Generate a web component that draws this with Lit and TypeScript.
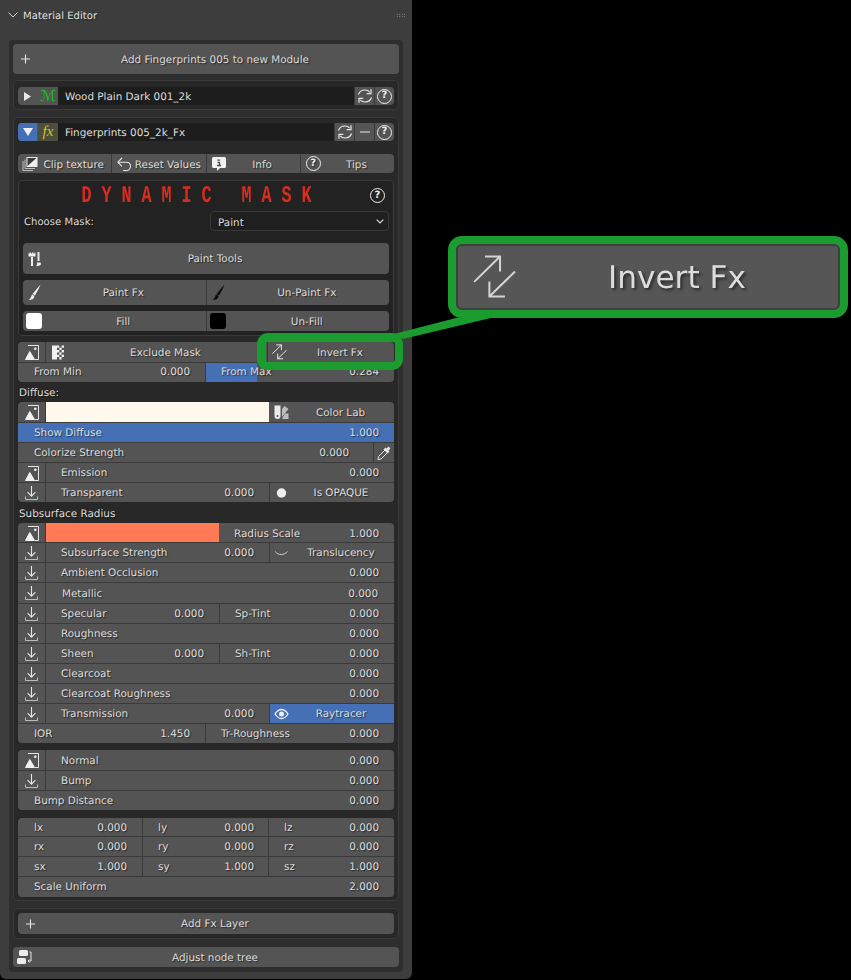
import { LitElement, html, css, svg } from "lit";
import { customElement } from "lit/decorators.js";

const S = (inner: unknown, size = 16) => html`<svg class="ic" width=${size} height=${size} viewBox="0 0 16 16" fill="none" stroke="#e6e6e6" stroke-width="1.1">${inner}</svg>`;

const icons: Record<string, unknown> = {
  plus: svg`<path d="M8.5 3.5v9M4 8h9" stroke-width="1.1"/>`,
  image: svg`<path d="M4 1.5H14.5V15.5H11" stroke-width="1"/><path d="M1.5 15.5L5.8 7.5 10.5 15.5z" fill="#f2f2f2" stroke="#f2f2f2" stroke-width="1"/><circle cx="11.3" cy="4.7" r="1.3" fill="#f2f2f2" stroke="none"/>`,
  imp: svg`<path d="M7.5 1v10M3.6 7.2l3.9 4 3.9-4" stroke-width="1.1"/><path d="M1.5 11.5v3h12v-3" stroke-width="1" stroke="#bdbdbd"/>`,
  refresh: svg`<path d="M1.5 6.5C2.5 3.5 5 2 8 2c2.2 0 3.6.8 4.8 2.2" stroke-width="1.2"/><path d="M14 1.3V5.6H9.7" stroke-width="1.2"/><path d="M14.5 9.5C13.5 12.5 11 14 8 14c-2.2 0-3.6-.8-4.8-2.2" stroke-width="1.2"/><path d="M2 14.7V10.4H6.3" stroke-width="1.2"/>`,
  minus: svg`<path d="M3 8h10" stroke-width="1.2"/>`,
  clip: svg`<path d="M1 5v9.5h10M3 3.5v9h10" stroke-width="1" stroke="#bdbdbd"/><path d="M5 1.5h10v9H5z" fill="#3a3a3a" stroke="#e6e6e6"/><path d="M5 10.5L15 1.5v9z" fill="#f0f0f0" stroke="none"/>`,
  reset: svg`<path d="M6 2L1.8 6.2 6 10.4" stroke-width="1.1"/><path d="M2 6.2H10.5C13 6.2 14.5 8 14.5 10.2S13 14.5 10.5 14.5H7" stroke-width="1.1"/>`,
  brushes: svg`<path d="M1.5 1.5h7v4h-7z" fill="#eee" stroke="none"/><path d="M4 6h2v9H4z" fill="#eee" stroke="none"/><path d="M2 1v1.5M4.5 1v1.5M7 1v1.5" stroke="#545454"/><path d="M11.5 1v9" stroke-width="2"/><path d="M10 11.5h3.5l.5 1.5c0 1.5-3 2.2-5 2 1-.5 1-2 1-3.500z" fill="#eee" stroke="none"/>`,
  brushW: svg`<path d="M13.5 -.5C12 3.500 10 7 8 10.500l-2.500-1.500C8 6 11 2.500 13.500 -.5z" fill="#f4f4f4" stroke="none"/><path d="M5 9.500l2.500 1.500c-.5 3-2.500 4-6 4 2-1.200 2.500-3 3.500-5.500z" fill="#f4f4f4" stroke="none"/>`,
  brushK: svg`<path d="M13.500 -.5C12 3.500 10 7 8 10.500l-2.500-1.500C8 6 11 2.500 13.500 -.5z" fill="#0a0a0a" stroke="none"/><path d="M5 9.500l2.500 1.500c-.5 3-2.500 4-6 4 2-1.200 2.500-3 3.500-5.500z" fill="#0a0a0a" stroke="none"/>`,
  checker: svg`<path d="M2 1.500h5v14H2z" fill="#f0f0f0" stroke="none"/><path d="M7 1.500h2.300v2.300H7zM11.600 1.500h2.400v2.300h-2.400zM9.300 3.800h2.300v2.300H9.300zM7 6.100h2.300v2.300H7zM11.600 6.100h2.400v2.300h-2.400zM9.300 8.400h2.300v2.300H9.300zM7 10.700h2.300v2.300H7zM11.600 10.700h2.400v2.300h-2.400zM9.300 13h2.300v2.500H9.300z" fill="#f0f0f0" stroke="none"/>`,
  invert: svg`<path d="M.4 9.700L9.400.9M4.200.9h5.200v5.200M14.600 6.100L5.700 14.800M5.700 9.600v5.200h5.400" stroke-width="1"/>`,
  lab: svg`<path d="M1.500 1.500h6v10.500a3 3 0 0 1-6 0z" fill="#ececec" stroke="none"/><circle cx="4.500" cy="12" r="1" fill="#545454" stroke="none"/><path d="M9 5l2.500-3 4 3L9 13z" fill="#bdbdbd" stroke="none"/><path d="M9 15h6.500V9.500H12z" fill="#bdbdbd" stroke="none"/>`,
  dropper: svg`<path d="M9 5L2.500 11.500 2 14.500l3-.5L11.500 7.500z" stroke-width="1"/><path d="M8.500 3.500l4 4M11 5l2.500-2.500" stroke-width="2.600"/>`,
  dot: svg`<circle cx="7.500" cy="8" r="4.700" fill="#ededed" stroke="none"/>`,
  arc: svg`<path d="M1.500 6.500C3.500 10.500 10.500 10.500 13.500 6.500" stroke-width="1" stroke="#cfcfcf"/>`,
  eye: svg`<path d="M1 8c2-3 4-4.500 6.500-4.500S12 5 14 8c-2 3-4 4.500-6.500 4.500S3 11 1 8z" stroke="#f2f2f2" stroke-width="1.300"/><circle cx="7.500" cy="8" r="2.500" fill="#f2f2f2" stroke="none"/>`,
  info: svg`<path d="M2.500 1h11a1.500 1.500 0 0 1 1.500 1.500v8a1.500 1.500 0 0 1-1.500 1.500H9l-3 3v-3H2.500A1.500 1.500 0 0 1 1 10.500v-8A1.500 1.500 0 0 1 2.500 1z" fill="#f0f0f0" stroke="none"/><path d="M6.500 4.200h2.500M6.500 6.300h2v3.200M6 9.500h4" stroke="#4a4a4a" stroke-width="1.300"/>`,
  node: svg`<rect x="2" y="1" width="9" height="6" rx="1.500" fill="#ececec" stroke="none"/><rect x="0" y="9" width="9" height="6" rx="1.500" fill="#ececec" stroke="none"/><path d="M12.500 3h1.500v9h-3M12.500 10.500l-1.500 1.500 1.500 1.500" stroke-width="1"/>`,
};

const ic = (n: string, size = 16) => S(icons[n], size);

type Cell = { l?: string; v?: string; w?: number; pl?: number; pr?: number; on?: boolean; fill?: number };

@customElement("app-root")
export class AppRoot extends LitElement {
  static styles = css`
    :host { display: block; position: relative; width: 851px; height: 980px; background: #000; overflow: hidden;
      font: 10.4px/1 "DejaVu Sans", sans-serif; color: #dcdcdc; text-rendering: geometricPrecision; }
    * { box-sizing: border-box; }
    .panel { width: 412px; height: 979px; background: #3d3d3d; border-radius: 0 0 6px 6px; }
    .head { height: 40px; display: flex; align-items: center; padding: 0 6px 10px 8px; color: #e2e2e2; }
    .head .title { margin-left: 5px; flex: 1; font-size: 10.100px; padding-top: 4px; text-shadow: 1px 1px 1px #0007; }
    .grip { width: 10px; height: 5px; background-image: radial-gradient(#aaa 0.6px, transparent 0.8px); background-size: 2.500px 2.500px; }
    .inner { margin-left: 9px; width: 394px; height: 932px; background: #2e2e2e; border-radius: 4px; padding: 4px; }
    .btn, .cell { display: flex; align-items: center; text-shadow: 1px 1px 1px #0008; white-space: nowrap; }
    .btn { background: #545454; border-radius: 4px; }
    .slot { width: 18px; flex: none; }
    .slot .ic { display: block; margin-left: 4px; overflow: visible; }
    .mid { flex: 1; text-align: center; padding-top: 2px; }
    .t { padding-top: 2px; }
    .cell > span { padding-top: 2px; }
    .add { height: 30px; }
    .box { background: #282828; border: 1px solid #3a3a3a; border-radius: 5px; padding: 0 4px; margin-top: 7px; }
    .b2 { height: 30px; padding-top: 6px; margin-top: 6px; }
    .b3 { height: 784px; padding-top: 5px; }
    .b4 { height: 31px; padding-top: 4px; }
    .adj { height: 20px; margin-top: 8px; }
    .nameRow { height: 18px; display: flex; background: #545454; border-radius: 4px; overflow: hidden; }
    .tog { width: 19px; flex: none; display: flex; align-items: center; justify-content: center; }
    .tog.on { background: #4570b5; }
    .badge { width: 20px; margin-left: 1px; flex: none; display: flex; align-items: center; justify-content: center; font-family: "Liberation Serif", serif; font-style: italic; font-size: 15px; }
    .badge.m { color: #14c814; font-family: "DejaVu Serif", "DejaVu Sans", serif; font-style: italic; font-size: 15px; }
    .badge.fx { color: #c8c820; background: #4e4e3c; }
    .name { flex: 1; background: #1d1d1d; padding-left: 7px; display: flex; align-items: center; }
    .act { width: 20px; flex: none; border-left: 1px solid #3a3a3a; display: flex; align-items: center; justify-content: center; }
    .help { width: 15px; height: 15px; border: 1.500px solid #eee; border-radius: 50%; color: #eee; font-weight: bold; font-size: 10px; display: flex; align-items: center; justify-content: center; flex: none; }
    .tools { display: flex; height: 19px; margin-top: 13px; background: #545454; border-radius: 4px; overflow: hidden; }
    .tools .cell { flex: 1; border-left: 1px solid #3a3a3a; }
    .tools .cell:first-child { border-left: 0; }
    .tools .mid { padding-top: 3px; }
    .mask { height: 156px; margin-top: 7px; background: #222; border: 1px solid #3a3a3a; border-radius: 4px; padding: 0 4px; position: relative; }
    .dyn { height: 30px; display: flex; align-items: center; justify-content: center; }
    .dyn span { display: inline-block; font: bold 24px "Liberation Mono", monospace; color: #d92c1e; letter-spacing: 14.170px; white-space: pre; transform: scaleX(0.7); margin-left: -10px; }
    .mask .help.top { position: absolute; right: 8px; top: 7px; }
    .choose { height: 20px; display: flex; align-items: center; justify-content: space-between; padding-left: 1px; text-shadow: 1px 1px 1px #0008; }
    .choose .t { font-size: 10.100px; padding-top: 4px; }
    .sel .t { font-size: 10.400px; }
    .sel { width: 179px; height: 20px; background: #1f1f1f; border: 1px solid #383838; border-radius: 4px; display: flex; align-items: center; justify-content: space-between; padding: 0 4px 0 7px; }
    .tool { height: 31px; margin-top: 12px; }
    .pair { display: flex; border-radius: 4px; overflow: hidden; background: #545454; }
    .pair .cell { flex: 1; }
    .pair .cell + .cell { border-left: 1px solid #3a3a3a; }
    .p1 { height: 25px; margin-top: 6px; }
    .p2 { height: 20px; margin-top: 6px; }
    .sw { width: 16px; height: 16px; border-radius: 3px; margin-left: 3px; }
    .sw.w { background: #fff; } .sw.k { background: #000; }
    .block { background: #545454; border-radius: 4px; overflow: hidden; }
    .row { display: flex; height: 20px; border-top: 1px solid #3a3a3a; }
    .row:first-child { border-top: 0; }
    .row.r18 { height: 18px; } .row.r19 { height: 19px; } .row.r21 { height: 21px; }
    .row.up .cell > span { padding-top: 0; }
    .row.low .cell > span { padding-top: 4px; }
    .cell { height: 100%; flex: none; justify-content: space-between; }
    .cell + .cell { border-left: 1px solid #3a3a3a; }
    .cell.last { flex: 1; }
    .cell.on { background: #4570b5; }
    .ico { width: 27px; justify-content: center; }
    .ico .ic { display: block; }
    .ibtn { flex: 1; justify-content: flex-start; }
    .swatch { flex: none; height: 100%; }
    .label { height: 20px; display: flex; align-items: center; padding-left: 1px; text-shadow: 1px 1px 1px #0008; }
    .label.sub { height: 21px; }
    .label.sub .t { padding-top: 4px; }
    .mt7 { margin-top: 7px; } .mt8 { margin-top: 8px; } .mt6 { margin-top: 6px; }
    .hl { position: absolute; border: 8px solid #1a9c2e; }
    .hl.small { left: 257px; top: 333px; width: 146px; height: 37px; border-width: 9px 8px 8px 9px; border-radius: 11px; }
    .hl.big { left: 448px; top: 236px; width: 400px; height: 82px; border-radius: 14px; background: #565656; display: flex; align-items: center; }
    .hl.big .in { flex: 1; display: flex; align-items: center; height: 100%; font-size: 31.200px; color: #dcdcdc; filter: blur(0.7px); text-shadow: 2px 2px 3px #0008; border: 2px solid #3f3f3f; border-radius: 6px; }
    .hl.big .mid { padding-top: 4px; }
    .hl.big .sl { width: 58px; flex: none; }
    .hl.big .sl .ic { display: block; margin-left: 15px; overflow: visible; }
    .hl.big .sl path { stroke-width: 0.7; stroke: #d4d4d4; }
    .wire { position: absolute; left: 380px; top: 300px; }
  `;

  f(c: Cell) {
    const st = [
      c.w ? `width:${c.w}px` : "",
      `padding:0 ${c.pr ?? 15}px 0 ${c.pl ?? 15}px`,
      c.fill ? `background:linear-gradient(90deg,#4570b5 ${c.fill}%,transparent ${c.fill}%)` : "",
    ].join(";");
    return html`<div class="cell ${c.w ? "" : "last"} ${c.on ? "on" : ""}" style=${st}><span>${c.l}</span><span>${c.v}</span></div>`;
  }
  ico(n: string) { return html`<div class="cell ico">${ic(n)}</div>`; }
  ib(icon: string, t: string, on = false) {
    return html`<div class="cell ibtn ${on ? "on" : ""}"><div class="slot">${ic(icon)}</div><div class="mid">${t}</div></div>`;
  }
  ir(n: string, l: string, v = "0.000", pl = 15, pr = 15, cls = "") {
    return html`<div class="row ${cls}">${this.ico(n)}${this.f({ l, v, pl, pr })}</div>`;
  }
  help() { return html`<div class="help">?</div>`; }

  render() {
    const z = "0.000";
    return html`
      <div class="panel">
        <div class="head">
          <svg width="10" height="6" viewBox="0 0 10 6" fill="none" stroke="#d0d0d0" stroke-width="1"><path d="M.5.5L5 5 9.500.5"/></svg>
          <div class="title">Material Editor</div>
          <div class="grip"></div>
        </div>
        <div class="inner">
          <div class="btn add"><div class="slot">${ic("plus")}</div><div class="mid">Add Fingerprints 005 to new Module</div></div>

          <div class="box b2">
            <div class="nameRow">
              <div class="tog"><svg width="9" height="9" viewBox="0 0 9 9"><path d="M1 0l7 4.500-7 4.500z" fill="#e8e8e8"/></svg></div>
              <div class="badge m">ℳ</div>
              <div class="name"><span class="t">Wood Plain Dark 001_2k</span></div>
              <div class="act">${ic("refresh")}</div>
              <div class="act">${this.help()}</div>
            </div>
          </div>

          <div class="box b3">
            <div class="nameRow">
              <div class="tog on"><svg width="10" height="8" viewBox="0 0 10 8"><path d="M0 0h10L5 8z" fill="#f0f0f0"/></svg></div>
              <div class="badge fx">fx</div>
              <div class="name"><span class="t">Fingerprints 005_2k_Fx</span></div>
              <div class="act">${ic("refresh")}</div>
              <div class="act">${ic("minus")}</div>
              <div class="act">${this.help()}</div>
            </div>

            <div class="tools">
              ${this.ib("clip", "Clip texture")}
              ${this.ib("reset", "Reset Values")}
              ${this.ib("info", "Info")}
              <div class="cell ibtn"><div class="slot"><div class="help" style="margin-left:5px">?</div></div><div class="mid">Tips</div></div>
            </div>

            <div class="mask">
              <div class="dyn"><span>DYNAMIC MASK</span></div>
              <div class="help top">?</div>
              <div class="choose"><span class="t">Choose Mask:</span>
                <div class="sel"><span class="t">Paint</span>
                  <svg width="8" height="5" viewBox="0 0 8 5" fill="none" stroke="#ddd" stroke-width="1.200"><path d="M.7.7L4 4 7.300.7"/></svg>
                </div>
              </div>
              <div class="btn tool"><div class="slot">${ic("brushes")}</div><div class="mid">Paint Tools</div></div>
              <div class="pair p1">${this.ib("brushW", "Paint Fx")}${this.ib("brushK", "Un-Paint Fx")}</div>
              <div class="pair p2">
                <div class="cell ibtn"><div class="slot"><div class="sw w"></div></div><div class="mid">Fill</div></div>
                <div class="cell ibtn"><div class="slot"><div class="sw k"></div></div><div class="mid">Un-Fill</div></div>
              </div>
            </div>

            <div class="block mt6">
              <div class="row">
                ${this.ico("image")}
                <div class="cell" style="width:222px;justify-content:flex-start"><div class="slot">${ic("checker")}</div><div class="mid">Exclude Mask</div></div>
                ${this.ib("invert", "Invert Fx")}
              </div>
              <div class="row up">
                ${this.f({ l: "From Min", v: z, w: 187, pl: 16 })}
                ${this.f({ l: "From Max", v: "0.284", fill: 27 })}
              </div>
            </div>

            <div class="label"><span class="t">Diffuse:</span></div>
            <div class="block">
              <div class="row">
                ${this.ico("image")}
                <div class="swatch" style="width:224px;background:#fff8ec;border-left:1px solid #3a3a3a"></div>
                ${this.ib("lab", "Color Lab")}
              </div>
              <div class="row">${this.f({ l: "Show Diffuse", v: "1.000", pl: 16, on: true })}</div>
              <div class="row">
                ${this.f({ l: "Colorize Strength", v: z, w: 355, pl: 16, pr: 24 })}
                <div class="cell ico last">${ic("dropper")}</div>
              </div>
              ${this.ir("image", "Emission")}
              <div class="row">${this.ico("imp")}${this.f({ l: "Transparent", v: z, w: 224 })}${this.ib("dot", "Is OPAQUE")}</div>
            </div>

            <div class="label sub"><span class="t">Subsurface Radius</span></div>
            <div class="block">
              <div class="row r19 low">
                ${this.ico("image")}
                <div class="swatch" style="width:174px;background:#ff7a55;border-left:1px solid #3a3a3a"></div>
                ${this.f({ l: "Radius Scale", v: "1.000", pl: 15 })}
              </div>
              <div class="row">${this.ico("imp")}${this.f({ l: "Subsurface Strength", v: z, w: 224 })}${this.ib("arc", "Translucency")}</div>
              ${this.ir("imp", "Ambient Occlusion")}
              ${this.ir("imp", "Metallic", z, 16, 16, "r21")}
              <div class="row">${this.ico("imp")}${this.f({ l: "Specular", v: z, w: 174 })}${this.f({ l: "Sp-Tint", v: z })}</div>
              ${this.ir("imp", "Roughness")}
              <div class="row">${this.ico("imp")}${this.f({ l: "Sheen", v: z, w: 174 })}${this.f({ l: "Sh-Tint", v: z })}</div>
              ${this.ir("imp", "Clearcoat")}
              ${this.ir("imp", "Clearcoat Roughness")}
              <div class="row">${this.ico("imp")}${this.f({ l: "Transmission", v: z, w: 224 })}${this.ib("eye", "Raytracer", true)}</div>
              <div class="row">${this.f({ l: "IOR", v: "1.450", w: 187, pl: 16 })}${this.f({ l: "Tr-Roughness", v: z })}</div>
            </div>

            <div class="block mt7">
              ${this.ir("image", "Normal")}
              ${this.ir("imp", "Bump")}
              <div class="row">${this.f({ l: "Bump Distance", v: z, pl: 16 })}</div>
            </div>

            <div class="block mt8">
              ${([["lx", "ly", "lz", z, "r18"], ["rx", "ry", "rz", z, ""], ["sx", "sy", "sz", "1.000", ""]] as string[][]).map(([a, b, c, v, r]) => html`
                <div class="row ${r}">
                  ${this.f({ l: a, v, w: 124, pl: 16 })}
                  ${this.f({ l: b, v, w: 126, pr: 14 })}
                  ${this.f({ l: c, v })}
                </div>`)}
              <div class="row r21 up">${this.f({ l: "Scale Uniform", v: "2.000", pl: 16 })}</div>
            </div>
          </div>

          <div class="box b4">
            <div class="btn" style="height:21px"><div class="slot">${ic("plus")}</div><div class="mid">Add Fx Layer</div></div>
          </div>

          <div class="btn adj"><div class="slot">${ic("node")}</div><div class="mid">Adjust node tree</div></div>
        </div>
      </div>

      <svg class="wire" width="130" height="50" viewBox="380 300 130 50"><path d="M394 334L456 318 495 317 403 339z" fill="#1a9c2e"/></svg>
      <div class="hl small"></div>
      <div class="hl big"><div class="in"><div class="sl">${ic("invert", 46)}</div><div class="mid">Invert Fx</div></div></div>
    `;
  }
}
